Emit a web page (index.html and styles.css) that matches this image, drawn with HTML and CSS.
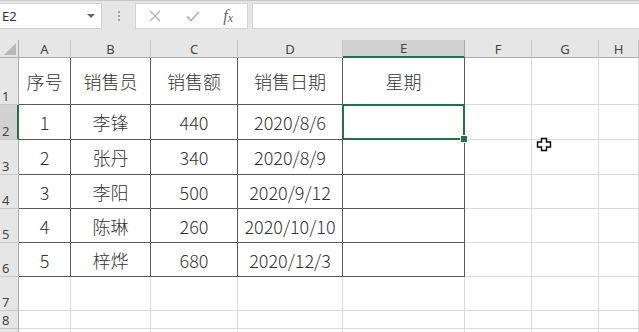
FILE: index.html
```html
<!DOCTYPE html>
<html lang="zh-CN">
<head>
  <meta charset="UTF-8" />
  <title>销售表</title>
  <link rel="stylesheet" href="styles.css">
</head>
<body>
  <div class="app">
    <div class="toolbar">
      <div class="name-box">
        <span>E2</span>
        <span class="drop"></span>
      </div>
      <div class="grip"><i></i><i></i><i></i></div>
      <div class="fx-box">
        <svg class="ico" width="14" height="14" viewBox="0 0 14 14"><path d="M2 2 L12 12 M12 2 L2 12" stroke="#b4b4b4" stroke-width="1.4" fill="none"/></svg>
        <svg class="ico" width="16" height="14" viewBox="0 0 16 14"><path d="M2 7.5 L6 11.5 L14 3" stroke="#b4b4b4" stroke-width="1.8" fill="none"/></svg>
        <span class="fx">f<sub>x</sub></span>
      </div>
      <div class="formula"></div>
    </div>

    <div class="sheet">
      <div class="hd corner"><span class="tri"></span></div>
      <div class="hd">A</div>
      <div class="hd">B</div>
      <div class="hd">C</div>
      <div class="hd">D</div>
      <div class="hd on">E</div>
      <div class="hd">F</div>
      <div class="hd">G</div>
      <div class="hd">H</div>

      <div class="rh">1</div>
      <div class="c t">序号</div>
      <div class="c t">销售员</div>
      <div class="c t">销售额</div>
      <div class="c t">销售日期</div>
      <div class="c t">星期</div>
      <div class="c"></div>
      <div class="c"></div>
      <div class="c"></div>

      <div class="rh on">2</div>
      <div class="c t">1</div>
      <div class="c t">李锋</div>
      <div class="c t">440</div>
      <div class="c t">2020/8/6</div>
      <div class="c t sel"></div>
      <div class="c"></div>
      <div class="c"></div>
      <div class="c"></div>

      <div class="rh">3</div>
      <div class="c t">2</div>
      <div class="c t">张丹</div>
      <div class="c t">340</div>
      <div class="c t">2020/8/9</div>
      <div class="c t"></div>
      <div class="c"></div>
      <div class="c"></div>
      <div class="c"></div>

      <div class="rh">4</div>
      <div class="c t">3</div>
      <div class="c t">李阳</div>
      <div class="c t">500</div>
      <div class="c t">2020/9/12</div>
      <div class="c t"></div>
      <div class="c"></div>
      <div class="c"></div>
      <div class="c"></div>

      <div class="rh">5</div>
      <div class="c t">4</div>
      <div class="c t">陈琳</div>
      <div class="c t">260</div>
      <div class="c t">2020/10/10</div>
      <div class="c t"></div>
      <div class="c"></div>
      <div class="c"></div>
      <div class="c"></div>

      <div class="rh">6</div>
      <div class="c t">5</div>
      <div class="c t">梓烨</div>
      <div class="c t">680</div>
      <div class="c t">2020/12/3</div>
      <div class="c t"></div>
      <div class="c"></div>
      <div class="c"></div>
      <div class="c"></div>

      <div class="rh">7</div>
      <div class="c"></div>
      <div class="c"></div>
      <div class="c"></div>
      <div class="c"></div>
      <div class="c"></div>
      <div class="c"></div>
      <div class="c"></div>
      <div class="c"></div>

      <div class="rh">8</div>
      <div class="c"></div>
      <div class="c"></div>
      <div class="c"></div>
      <div class="c"></div>
      <div class="c"></div>
      <div class="c"></div>
      <div class="c"></div>
      <div class="c"></div>

      <div class="rh"></div>
      <div class="c"></div>
      <div class="c"></div>
      <div class="c"></div>
      <div class="c"></div>
      <div class="c"></div>
      <div class="c"></div>
      <div class="c"></div>
      <div class="c"></div>
    </div>

    <!-- mouse pointer over the sheet -->
    <svg class="pointer" width="18" height="16" viewBox="0 0 18 16">
      <path d="M5.5 1.5 H10.5 V5 H14.5 V10 H10.5 V13.5 H5.5 V10 H1.5 V5 H5.5 Z" fill="#fff" stroke="#000" stroke-width="1.4"/>
    </svg>
  </div>
</body>
</html>
```

FILE: styles.css
```css
* { margin: 0; padding: 0; box-sizing: border-box; }
body {
  font-family: "Noto Sans CJK SC", "Noto Sans", sans-serif;
  background-color: #fff;
  color: #333;
}
.app {
  position: relative;
  width: 639px;
  height: 332px;
  overflow: hidden;
}

/* formula bar */
.toolbar {
  height: 40px;
  display: flex;
  align-items: flex-start;
  padding-top: 2px;
  background-color: #e6e6e6;
  border-top: 1px solid #c6c6c6;
}
.name-box {
  width: 102px;
  height: 26px;
  display: flex;
  align-items: center;
  justify-content: space-between;
  padding: 0 6px 0 2px;
  background-color: #fff;
  border: 1px solid #d0d0d0;
  border-left: none;
  font-family: "Noto Sans", sans-serif;
  font-size: 13px;
  color: #333;
}
.drop {
  width: 0;
  height: 0;
  border-left: 4px solid transparent;
  border-right: 4px solid transparent;
  border-top: 4px solid #666;
}
.grip {
  width: 33px;
  height: 26px;
  display: flex;
  flex-direction: column;
  align-items: center;
  justify-content: center;
  gap: 2px;
}
.grip i { display: block; width: 2px; height: 2px; background-color: #a0a0a0; }
.fx-box {
  width: 113px;
  height: 26px;
  display: flex;
  align-items: center;
  justify-content: space-between;
  padding: 0 14px 0 12px;
  background-color: #fff;
  border: 1px solid #d4d4d4;
}
.fx {
  font-family: "Liberation Serif", serif;
  font-style: italic;
  font-size: 16px;
  color: #666;
  line-height: 1;
}
.fx sub { font-size: 12px; vertical-align: -1px; }
.formula {
  flex: 1;
  height: 26px;
  margin-left: 4px;
  background-color: #fff;
  border: 1px solid #d4d4d4;
  border-right: none;
}

/* grid */
.sheet {
  display: grid;
  grid-template-columns: 19px 52px 80px 87px 105px 122px 67px 67px 40px;
  grid-template-rows: 18px 47px 35px 35px 34px 34px 34px 34px 18px 20px;
}
.hd {
  display: flex;
  align-items: center;
  justify-content: center;
  background-color: #e6e6e6;
  border-right: 1px solid #c8c8c8;
  border-bottom: 1px solid #ababab;
  font-family: "Noto Sans", sans-serif;
  font-size: 13px;
  color: #444;
}
.hd.on {
  background-color: #d2d2d2;
  border-bottom: 2px solid #217346;
  border-right-color: #ababab;
}
.corner { position: relative; border-right-color: #ababab; }
.tri {
  position: absolute;
  right: 2px;
  bottom: 2px;
  width: 0;
  height: 0;
  border-left: 12px solid transparent;
  border-bottom: 12px solid #b8b8b8;
}
.rh {
  display: flex;
  align-items: flex-end;
  padding: 0 0 0 2px;
  background-color: #e6e6e6;
  border-right: 1px solid #ababab;
  border-bottom: 1px solid #c8c8c8;
  font-family: "Noto Sans", sans-serif;
  font-size: 13px;
  line-height: 16px;
  color: #444;
}
.rh.on { background-color: #d2d2d2; border-right: 2px solid #217346; }
.c {
  display: flex;
  align-items: center;
  justify-content: center;
  border-right: 1px solid #dadada;
  border-bottom: 1px solid #dadada;
  font-size: 18px;
  font-weight: 300;
  color: #333;
}
.c.t { border-right-color: #5a5a5a; border-bottom-color: #5a5a5a; }

/* active cell */
.sel { position: relative; }
.sel::after {
  content: '';
  position: absolute;
  left: -1px;
  top: -1px;
  right: -1px;
  bottom: -1px;
  border: 2px solid #217346;
}
.sel::before {
  content: '';
  position: absolute;
  right: -4px;
  bottom: -4px;
  width: 6px;
  height: 6px;
  background-color: #217346;
  border: 1px solid #fff;
  z-index: 1;
}

.pointer {
  position: absolute;
  left: 536px;
  top: 137px;
}
```
